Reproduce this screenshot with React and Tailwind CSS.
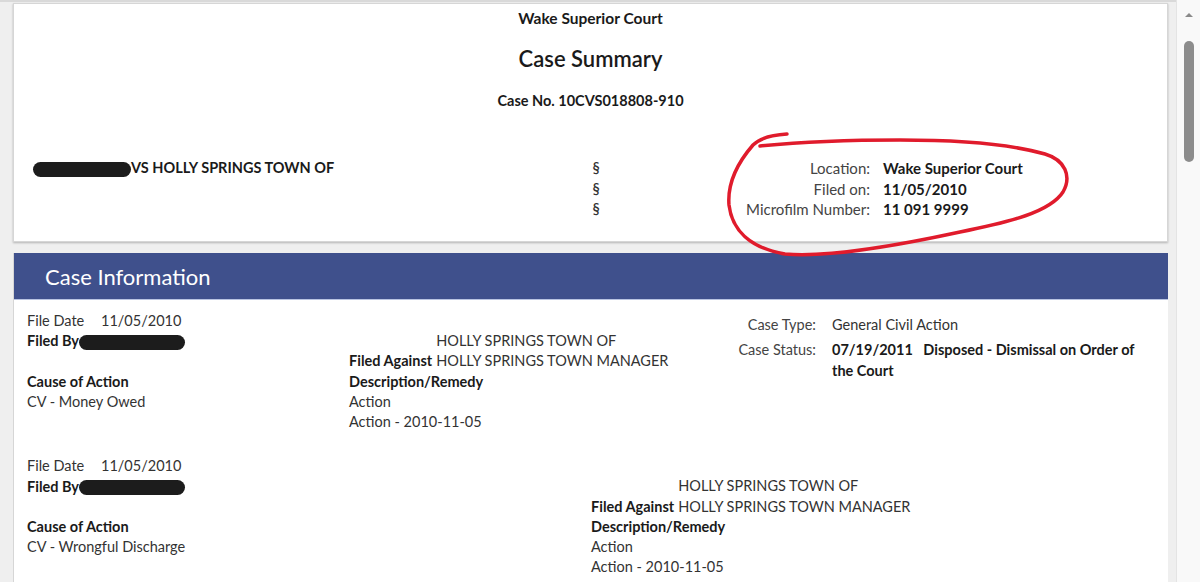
import React from "react";

function Redact({ className }) {
  return <span className={"inline-block rounded-full bg-[#1c1c1c] align-middle " + className} />;
}

function Scrollbar() {
  return (
    <div className="flex w-[24px] flex-col items-center border-l border-[#e4e4e4] bg-[#f9f9f9]">
      <div className="mt-[13px] h-0 w-0 border-x-[4px] border-b-[4px] border-x-transparent border-b-[#8a8a8a]" />
      <div className="mt-[24px] h-[121px] w-[10px] rounded-full bg-[#8c8c8c]" />
    </div>
  );
}

function SummaryCard() {
  return (
    <div className="h-[239px] border border-[#d6d6d6] bg-white shadow-[0_1px_2px_rgba(0,0,0,0.25)]">
      <div className="flex flex-col items-center pt-[4px] text-[#1a1a1a]">
        <div className="text-[15.5px] font-bold leading-[20px]">Wake Superior Court</div>
        <div className="mt-[16px] text-[22px] font-semibold leading-[30px]">Case Summary</div>
        <div className="mt-[17px] text-[14.5px] font-bold leading-[20px]">Case No. 10CVS018808-910</div>
      </div>

      <div className="mt-[47px] flex text-[14.5px] leading-[20.5px]">
        <div className="w-[559px] pl-[19px] font-bold text-[#1a1a1a]">
          <Redact className="h-[15px] w-[98px]" />
          VS HOLLY SPRINGS TOWN OF
        </div>
        <div className="w-[46px] text-center font-semibold text-[#333]">
          <div>§</div>
          <div>§</div>
          <div>§</div>
        </div>
        <div className="grid grid-cols-[251px_1fr] gap-x-[13px] text-[15px]">
          <div className="text-right text-[#444]">Location:</div>
          <div className="font-bold text-[#1a1a1a]">Wake Superior Court</div>
          <div className="text-right text-[#444]">Filed on:</div>
          <div className="font-bold text-[#1a1a1a]">11/05/2010</div>
          <div className="text-right text-[#444]">Microfilm Number:</div>
          <div className="font-bold text-[#1a1a1a]">11 091 9999</div>
        </div>
      </div>
    </div>
  );
}

function LeftColumn({ width, cause }) {
  return (
    <div className={"shrink-0 pl-[13px] " + width}>
      <div className="text-[#333]">
        <span className="inline-block w-[74px]">File Date</span>11/05/2010
      </div>
      <div className="font-bold text-[#1a1a1a]">
        Filed By
        <Redact className="h-[15px] w-[106px]" />
      </div>
      <div className="h-[20px]" />
      <div className="font-bold text-[#1a1a1a]">Cause of Action</div>
      <div className="text-[#333]">{cause}</div>
    </div>
  );
}

function PartyColumn({ width }) {
  return (
    <div className={"mt-[20px] shrink-0 " + width}>
      <div className="grid w-max grid-cols-[auto_auto] gap-x-[4px]">
        <div />
        <div className="text-[#333]">HOLLY SPRINGS TOWN OF</div>
        <div className="font-bold text-[#1a1a1a]">Filed Against</div>
        <div className="text-[#333]">HOLLY SPRINGS TOWN MANAGER</div>
      </div>
      <div className="font-bold text-[#1a1a1a]">Description/Remedy</div>
      <div className="text-[#333]">Action</div>
      <div className="text-[#333]">Action - 2010-11-05</div>
    </div>
  );
}

function CaseInformation() {
  return (
    <div className="mt-[11px] flex-1 border-l border-[#d6d6d6] bg-white">
      <div className="flex h-[47px] items-center border-b border-[#b9c4e2] bg-[#3f508c] pl-[31px]">
        <h2 className="text-[22px] font-normal text-white">Case Information</h2>
      </div>

      <div className="pt-[11px] text-[14.5px] leading-[20.25px]">
        {/* first filing */}
        <div className="flex items-start">
          <LeftColumn width="w-[335px]" cause="CV - Money Owed" />
          <PartyColumn width="w-[381px]" />
          <div className="mt-[4px] grid flex-1 content-start grid-cols-[86px_1fr] gap-x-[16px] gap-y-[5px] pr-[18px]">
            <div className="text-right text-[#444]">Case Type:</div>
            <div className="text-[#333]">General Civil Action</div>
            <div className="text-right text-[#444]">Case Status:</div>
            <div className="font-bold text-[#1a1a1a]">
              <span className="whitespace-nowrap">07/19/2011&nbsp;&nbsp;&nbsp;Disposed - Dismissal on Order of</span>
              <br />
              the Court
            </div>
          </div>
        </div>

        {/* second filing */}
        <div className="mt-[24px] flex items-start">
          <LeftColumn width="w-[577px]" cause="CV - Wrongful Discharge" />
          <PartyColumn width="w-[400px]" />
        </div>
      </div>
    </div>
  );
}

export default function App() {
  return (
    <div className="relative flex h-[582px] w-[1200px] overflow-hidden bg-[#efefef] font-['Lato',sans-serif]">
      <div className="flex flex-1 flex-col border-t-[2px] border-[#d9d9d9] pl-[13px] pr-[8px] pt-[1px]">
        <SummaryCard />
        <CaseInformation />
      </div>
      <Scrollbar />

      {/* hand-drawn annotation */}
      <svg className="pointer-events-none absolute left-0 top-0" width="1200" height="582" viewBox="0 0 1200 582" fill="none">
        <path
          d="M787,134 C770,135 760,138 753,145 C740,160 727,180 729,205 C732,230 750,248 785,254 C830,258 900,245 960,232 C1010,222 1050,212 1063,192 C1072,176 1065,160 1045,154 C1010,144 960,140 900,140 C850,140 800,142 760,146"
          stroke="#e01b2c"
          strokeWidth="3.5"
          strokeLinecap="round"
          strokeLinejoin="round"
        />
      </svg>
    </div>
  );
}
